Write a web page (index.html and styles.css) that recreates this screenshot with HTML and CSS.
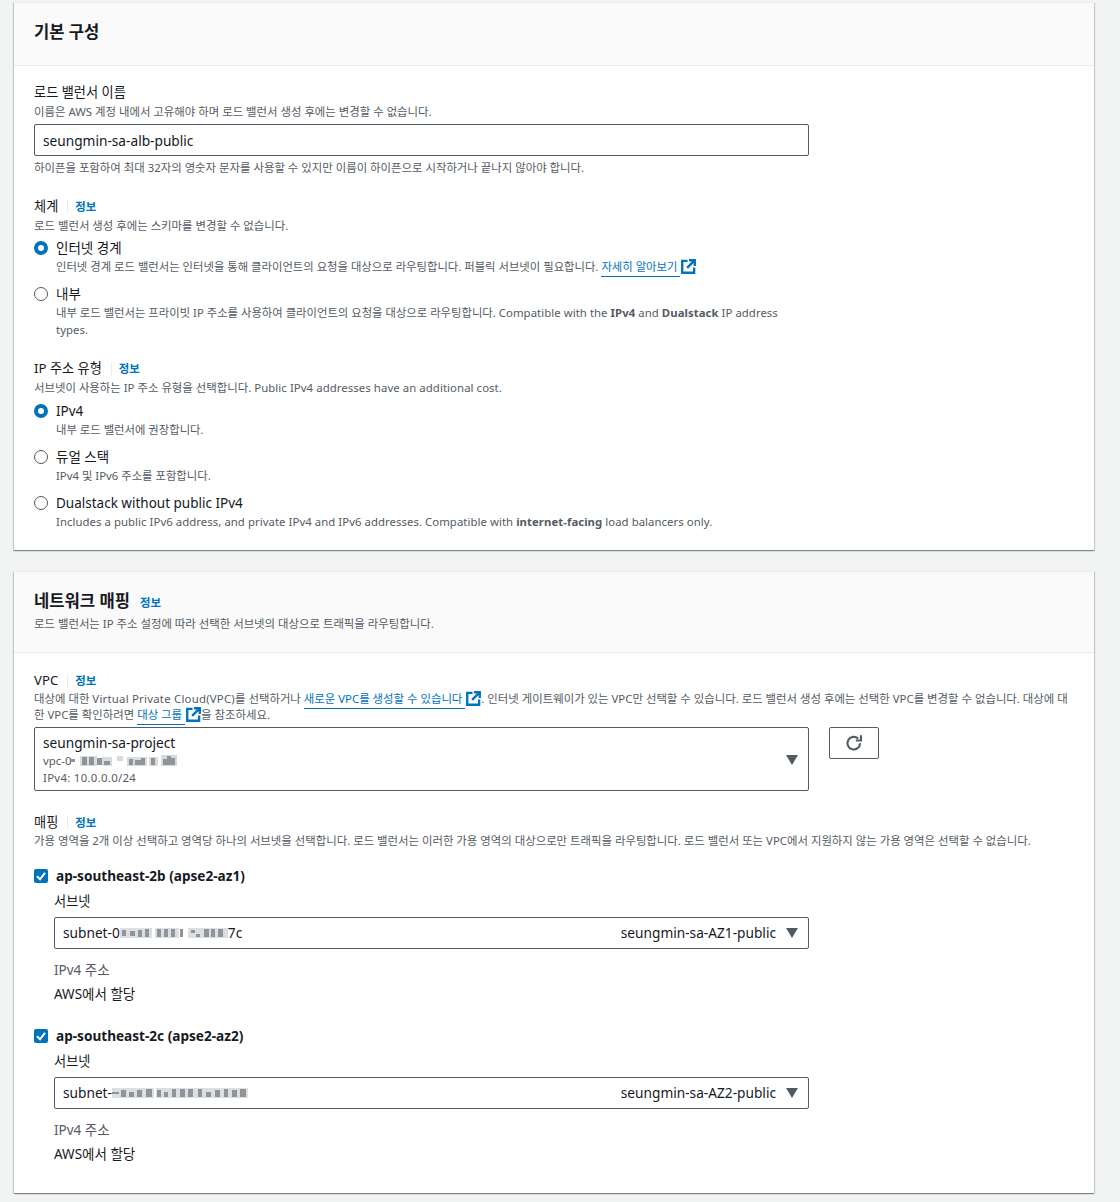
FILE: index.html
```html
<!DOCTYPE html>
<html lang="ko">
<head>
<meta charset="utf-8">
<title>로드 밸런서 생성</title>
<link rel="stylesheet" href="styles.css">
</head>
<body>
<svg class="defs" width="0" height="0" aria-hidden="true">
  <symbol id="ext" viewBox="0 0 16 16"><path d="M7 2H1.3v12.7H14V9" fill="none" stroke="currentColor" stroke-width="2.5"/><path d="M8.5 1.3h6.2v6.2" fill="none" stroke="currentColor" stroke-width="2.5"/><path d="M14.5 1.5 6.5 9.5" fill="none" stroke="currentColor" stroke-width="2.5"/></symbol>
  <symbol id="caret" viewBox="0 0 12 10"><path d="M0 0h12L6 10z" fill="currentColor"/></symbol>
  <symbol id="check" viewBox="0 0 14 14"><path d="M3 7.3 6 10.3 11 3.8" fill="none" stroke="#fff" stroke-width="2"/></symbol>
</svg>
<main class="page">
  <section class="card card-basic">
    <header class="card-head head-basic"><h2 class="title">기본 구성</h2></header>
    <div class="card-body body-basic">
      <div class="field">
        <div class="label label-first">로드 밸런서 이름</div>
        <div class="desc">이름은 AWS 계정 내에서 고유해야 하며 로드 밸런서 생성 후에는 변경할 수 없습니다.</div>
        <div class="input">seungmin-sa-alb-public</div>
        <div class="desc hint">하이픈을 포함하여 최대 32자의 영숫자 문자를 사용할 수 있지만 이름이 하이픈으로 시작하거나 끝나지 않아야 합니다.</div>
      </div>
      <div class="field gap-scheme">
        <div class="label-row"><span class="label">체계</span><a class="info">정보</a></div>
        <div class="desc">로드 밸런서 생성 후에는 스키마를 변경할 수 없습니다.</div>
        <div class="options">
          <div class="option">
            <span class="radio on"></span>
            <div><div class="opt-title">인터넷 경계</div>
            <div class="desc">인터넷 경계 로드 밸런서는 인터넷을 통해 클라이언트의 요청을 대상으로 라우팅합니다. 퍼블릭 서브넷이 필요합니다. <a class="link">자세히 알아보기</a><svg class="ext"><use href="#ext"/></svg></div></div>
          </div>
          <div class="option">
            <span class="radio"></span>
            <div><div class="opt-title">내부</div>
            <div class="desc">내부 로드 밸런서는 프라이빗 IP 주소를 사용하여 클라이언트의 요청을 대상으로 라우팅합니다. <span class="en">Compatible with the <b>IPv4</b> and <b>Dualstack</b> IP address types.</span></div></div>
          </div>
        </div>
      </div>
      <div class="field gap-ip">
        <div class="label-row"><span class="label">IP 주소 유형</span><a class="info">정보</a></div>
        <div class="desc">서브넷이 사용하는 IP 주소 유형을 선택합니다. <span class="en">Public IPv4 addresses have an additional cost.</span></div>
        <div class="options">
          <div class="option">
            <span class="radio on"></span>
            <div><div class="opt-title">IPv4</div><div class="desc">내부 로드 밸런서에 권장합니다.</div></div>
          </div>
          <div class="option">
            <span class="radio"></span>
            <div><div class="opt-title">듀얼 스택</div><div class="desc">IPv4 및 IPv6 주소를 포함합니다.</div></div>
          </div>
          <div class="option">
            <span class="radio"></span>
            <div><div class="opt-title">Dualstack without public IPv4</div><div class="desc en">Includes a public IPv6 address, and private IPv4 and IPv6 addresses. Compatible with <b>internet-facing</b> load balancers only.</div></div>
          </div>
        </div>
      </div>
    </div>
  </section>

  <section class="card card-net">
    <header class="card-head head-net">
      <div class="head-line"><h2 class="title">네트워크 매핑</h2><a class="info info-title">정보</a></div>
      <div class="desc">로드 밸런서는 IP 주소 설정에 따라 선택한 서브넷의 대상으로 트래픽을 라우팅합니다.</div>
    </header>
    <div class="card-body body-net">
      <div class="field">
        <div class="label-row"><span class="label">VPC</span><a class="info">정보</a></div>
        <div class="desc desc-wide">대상에 대한 <span class="en-wide">Virtual Private Cloud(VPC)</span>를 선택하거나 <a class="link">새로운 VPC를 생성할 수 있습니다</a><svg class="ext"><use href="#ext"/></svg>. 인터넷 게이트웨이가 있는 VPC만 선택할 수 있습니다. 로드 밸런서 생성 후에는 선택한 VPC를 변경할 수 없습니다. 대상에 대한 VPC를 확인하려면 <a class="link">대상 그룹</a><svg class="ext"><use href="#ext"/></svg>을 참조하세요.</div>
        <div class="vpc-row">
          <div class="select select-vpc">
            <div class="vpc-lines">
              <div class="vpc-name">seungmin-sa-project</div>
              <div class="vpc-sub">vpc-0<svg class="mosaic" width="106" height="12" viewBox="0 0 106 12"><path fill="#d8dadc" d="M9 1h17v10H9zM31 2h10v9H31zM46 1h6v5h-6zM56 2h20v9H56zM78 2h9v9h-9zM90 0h16v11H90z"/><path fill="#8f949a" d="M0 4h4v3H0zM11 2h5v8h-5zM18 2h5v8h-5zM26 3h5v7h-5zM33 6h6v4h-6zM58 4h4v6h-4zM64 5h6v5h-6zM70 3h4v7h-4zM80 3h4v7h-4zM92 4h4v6h-4zM96 1h4v9h-4zM100 3h4v7h-4z"/></svg></div>
              <div class="vpc-sub vpc-ip">IPv4: 10.0.0.0/24</div>
            </div>
            <svg class="caret"><use href="#caret"/></svg>
          </div>
          <button class="refresh" type="button" aria-label="새로 고침">
            <svg width="18" height="18" viewBox="0 0 16 16"><path d="M13.4 8.2a5.6 5.6 0 1 1-1.7-4.1" fill="none" stroke="#545b64" stroke-width="1.9"/><path d="M14.2 1.2v4.6H9.6" fill="none" stroke="#545b64" stroke-width="1.9"/></svg>
          </button>
        </div>
      </div>
      <div class="field gap-map">
        <div class="label-row"><span class="label">매핑</span><a class="info">정보</a></div>
        <div class="desc">가용 영역을 2개 이상 선택하고 영역당 하나의 서브넷을 선택합니다. 로드 밸런서는 이러한 가용 영역의 대상으로만 트래픽을 라우팅합니다. 로드 밸런서 또는 VPC에서 지원하지 않는 가용 영역은 선택할 수 없습니다.</div>
        <div class="zone first-zone">
          <div class="zone-head"><span class="check"><svg width="14" height="14"><use href="#check"/></svg></span><b class="zone-name">ap-southeast-2b (apse2-az1)</b></div>
          <div class="zone-body">
            <div class="label">서브넷</div>
            <div class="select select-sub">
              <span class="sub-id">subnet-0<svg class="mosaic" width="108" height="12" viewBox="0 0 108 12"><path fill="#dcdee0" d="M0 1h32v10H0zM35 1h24v10H35zM68 1h40v10H68z"/><path fill="#8f949a" d="M2 3h4v6H2zM10 4h5v5h-5zM18 3h4v7h-4zM25 2h4v8h-4zM37 2h4v8h-4zM44 2h4v8h-4zM51 2h4v8h-4zM60 2h3v8h-3zM71 3h4v3h-4zM76 7h4v3h-4zM84 2h5v8h-5zM91 2h4v8h-4zM98 2h5v8h-5z"/></svg>7c</span>
              <span class="sub-name">seungmin-sa-AZ1-public</span>
              <svg class="caret"><use href="#caret"/></svg>
            </div>
            <div class="ip-label">IPv4 주소</div>
            <div class="ip-value">AWS에서 할당</div>
          </div>
        </div>
        <div class="zone second-zone">
          <div class="zone-head"><span class="check"><svg width="14" height="14"><use href="#check"/></svg></span><b class="zone-name">ap-southeast-2c (apse2-az2)</b></div>
          <div class="zone-body">
            <div class="label">서브넷</div>
            <div class="select select-sub">
              <span class="sub-id">subnet-<svg class="mosaic" width="137" height="12" viewBox="0 0 137 12"><path fill="#dcdee0" d="M0 1h42v10H0zM44 1h92v10H44z"/><path fill="#8f949a" d="M0 5h7v2H0zM9 3h5v7H9zM17 5h5v5h-5zM25 3h5v7h-5zM34 2h6v8h-6zM45 3h4v7h-4zM52 5h4v5h-4zM60 2h4v8h-4zM68 2h5v8h-5zM76 2h5v8h-5zM86 2h4v8h-4zM94 5h5v5h-5zM103 3h5v7h-5zM112 2h4v8h-4zM120 3h5v7h-5zM128 2h6v8h-6z"/></svg></span>
              <span class="sub-name">seungmin-sa-AZ2-public</span>
              <svg class="caret"><use href="#caret"/></svg>
            </div>
            <div class="ip-label">IPv4 주소</div>
            <div class="ip-value">AWS에서 할당</div>
          </div>
        </div>
      </div>
    </div>
  </section>
</main>
</body>
</html>
```
FILE: styles.css
```css
* { box-sizing: border-box; }
html, body { margin: 0; padding: 0; }
body {
  background: #f2f3f3;
  color: #16191f;
  font-family: "Noto Sans", "Noto Sans CJK KR", sans-serif;
  font-size: 14px;
  line-height: 20px;
}
.defs { position: absolute; }
.page { padding: 2px 26px 9px 14px; display: flex; flex-direction: column; gap: 21px; }
.card {
  background: #fff;
  border-top: 1px solid #eaeded;
  box-shadow: 0 1px 1px 0 rgba(0,28,36,.3), 1px 1px 1px 0 rgba(0,28,36,.15), -1px 1px 1px 0 rgba(0,28,36,.15);
}
.card-head { background: #fafafa; border-bottom: 1px solid #eaeded; padding: 0 20px; }
.head-basic { height: 63px; padding-top: 17px; }
.head-net { height: 81px; padding-top: 17px; }
.title { margin: 0; font-size: 16.6px; line-height: 24px; font-weight: 700; }
.head-line { display: flex; align-items: center; }
.head-net .desc { margin-top: 2px; }
.card-body { padding: 16px 20px 0; }
.body-basic { height: 484px; }
.body-net { height: 540px; }
.label { font-size: 13.2px; line-height: 20px; }
.label-first { display: block; margin-bottom: 1px; }
.label-row { display: flex; align-items: center; height: 20px; }
.body-basic .label-row + .desc { margin-top: 1px; }
.info {
  font-size: 11.4px; font-weight: 700; color: #0073bb; line-height: 14px;
  margin-left: 9px; padding-left: 7px; border-left: 1px solid #eaeded; margin-top: 2px;
}
.info-title { border-left: 0; padding-left: 0; margin-top: 4px; margin-left: 10px; }
.desc { font-size: 11.4px; line-height: 17px; color: #545b64; max-width: 753px; }
.option .desc { font-size: 11.35px; }
.field > .desc { max-width: none; }
.desc b { font-weight: 700; }
.en { letter-spacing: .06px; }
.en-wide { letter-spacing: .22px; }
.field > .desc.desc-wide { max-width: 1041px; line-height: 16px; margin-top: 1px; margin-bottom: 4px; }
.body-net > .field:first-child { padding-top: 1px; }
.input {
  height: 32px; width: 775px; margin-top: 4px;
  border: 1px solid #545b64; border-radius: 2px;
  padding: 6px 8px 4px; font-size: 13.7px; line-height: 20px;
}
.hint { margin-top: 3px; }
.gap-scheme { margin-top: 20px; }
.gap-ip { margin-top: 20px; }
.gap-map { margin-top: 21px; }
.options { display: flex; flex-direction: column; gap: 9px; margin-top: 5px; }
.gap-scheme .options { margin-top: 4px; }
.option { display: flex; gap: 8px; width: 775px; }
.option .opt-title { font-size: 13.5px; line-height: 20px; }
.radio {
  flex: none; width: 14px; height: 14px; margin-top: 3px;
  border: 1.5px solid #545b64; border-radius: 50%; background: #fff;
}
.radio.on { border: 4px solid #0073bb; }
.link { color: #0073bb; border-bottom: 1px solid #0073bb; padding: 0 3px 2px 0; }
.ext { width: 15px; height: 15px; margin-left: 1px; color: #0073bb; vertical-align: -3px; }
.vpc-row { display: flex; align-items: flex-start; gap: 20px; }
.select {
  display: flex; align-items: center;
  border: 1px solid #545b64; border-radius: 2px; background: #fff;
}
.select-vpc { width: 775px; height: 64px; padding: 2px 10px 0 8px; justify-content: space-between; }
.vpc-name { font-size: 13.7px; line-height: 18px; }
.vpc-sub { font-size: 11.4px; line-height: 17px; color: #545b64; display: flex; align-items: center; }
.vpc-ip { letter-spacing: .3px; }
.caret { width: 12px; height: 10px; color: #545b64; flex: none; }
.refresh {
  width: 50px; height: 32px; padding: 0; background: #fff;
  border: 1px solid #545b64; border-radius: 2px;
  display: flex; align-items: center; justify-content: center;
}
.zone-head { display: flex; align-items: center; gap: 8px; height: 20px; }
.first-zone { margin-top: 17px; }
.second-zone { margin-top: 22px; }
.check {
  width: 14px; height: 14px; background: #0073bb; border-radius: 2px; display: block; flex: none;
}
.check svg { display: block; }
.zone-name { font-size: 13.6px; font-weight: 700; }
.zone-body { padding: 5px 0 0 20px; }
.select-sub { width: 755px; height: 32px; margin-top: 6px; padding: 0 10px 0 8px; }
.sub-id { display: flex; align-items: center; font-size: 13.7px; flex: 1; }
.sub-name { font-size: 13.7px; margin-right: 10px; }
.mosaic { display: block; flex: none; }
.ip-label { font-size: 13.5px; color: #545b64; margin-top: 11px; }
.ip-value { font-size: 13.5px; margin-top: 4px; }
```
